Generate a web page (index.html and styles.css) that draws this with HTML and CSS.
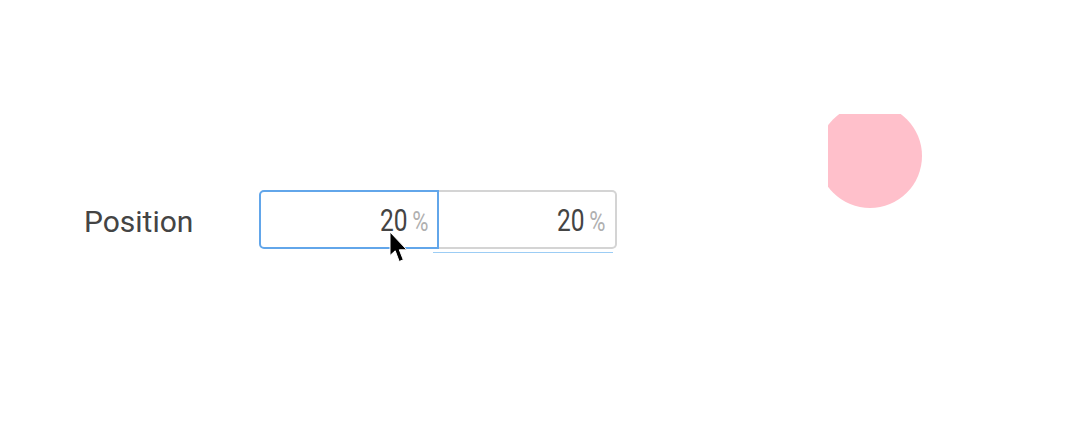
FILE: index.html
```html
<!DOCTYPE html>
<html>
<head>
<meta charset="utf-8">
<link rel="stylesheet" href="styles.css">
</head>
<body>
<div class="stage">
  <div class="row">
    <div class="label">Position</div>
    <div class="group">
      <div class="field active"><span class="val"><span class="num">20</span><span class="unit">%</span></span></div>
      <div class="field second"><span class="val"><span class="num">20</span><span class="unit">%</span></span></div>
      <div class="underline"></div>
      <svg class="cursor" width="20" height="33" viewBox="0 0 20 33"><path d="M1 1 L1 24.5 L6.2 19.8 L10.2 30.5 L14.3 28.8 L10.3 18.8 L17.8 18.8 Z" fill="#000" stroke="#fff" stroke-width="1" stroke-linejoin="round"/></svg>
    </div>
  </div>
  <div class="clip"><div class="circle"></div></div>
</div>
</body>
</html>
```
FILE: styles.css
```css
html, body { margin: 0; padding: 0; background: #fff; }
.stage { position: relative; width: 1080px; height: 432px; overflow: hidden; }
.row { display: flex; align-items: flex-start; padding-top: 190px; padding-left: 84px; }
.label { font-family: Roboto, "Liberation Sans", sans-serif; font-size: 30px; color: #444; width: 175px; line-height: 30px; padding-top: 17px; }
.group { position: relative; display: flex; }
.field { box-sizing: border-box; width: 180px; height: 59px; border: 2px solid #d4d4d4; display: flex; align-items: center; justify-content: flex-end; padding-right: 9px; font-family: Roboto, "Liberation Sans", sans-serif; }
.field.active { border-color: #62a6ea; border-radius: 5px 0 0 5px; }
.field.second { border-left: none; border-radius: 0 5px 5px 0; width: 178px; padding-right: 10px; }
.val { display: inline-flex; align-items: baseline; gap: 6px; transform: scaleX(0.79); transform-origin: right center; margin-top: 2px; }
.num { font-size: 31px; color: #444; line-height: 1; }
.unit { font-size: 28px; color: #b0b0b0; line-height: 1; }
.underline { position: absolute; left: 174px; top: 62px; width: 180px; height: 1px; background: #9ccdf5; }
.cursor { position: absolute; left: 130px; top: 41px; }
.clip { position: absolute; left: 828px; top: 114px; width: 120px; height: 120px; overflow: hidden; }
.circle { margin-left: -10px; margin-top: -10px; width: 104px; height: 104px; border-radius: 50%; background: #ffc0cb; }
```
